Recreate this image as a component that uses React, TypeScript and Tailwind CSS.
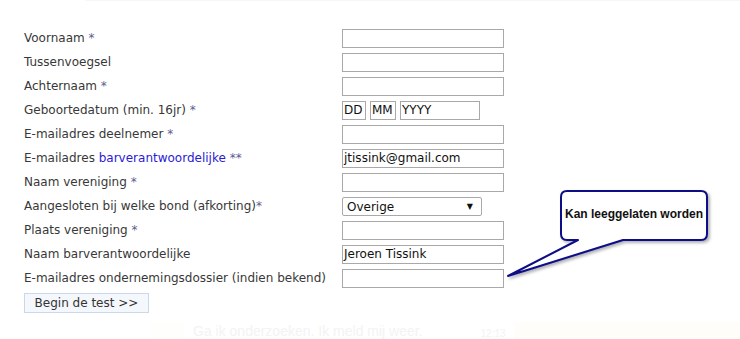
import React from "react";

const Star = ({ s = "*" }: { s?: string }) => (
  <span className="text-[#5c5c94]"> {s}</span>
);

function Input({ value = "", w = "w-[162px]" }: { value?: string; w?: string }) {
  return (
    <div
      className={`${w} h-[19px] border border-[#a9a9a9] bg-white px-[1px] text-[12px] leading-[17px] text-[#111] overflow-hidden whitespace-nowrap`}
    >
      {value}
    </div>
  );
}

export default function App() {
  const labelCls = "h-[19px] leading-[19px] whitespace-nowrap";
  const items: [React.ReactNode, React.ReactNode][] = [
    [<>Voornaam<Star /></>, <Input />],
    [<>Tussenvoegsel</>, <Input />],
    [<>Achternaam<Star /></>, <Input />],
    [
      <>Geboortedatum (min. 16jr)<Star /></>,
      <div className="flex gap-[4px]">
        <Input value="DD" w="w-[24px]" />
        <Input value="MM" w="w-[26px]" />
        <Input value="YYYY" w="w-[80px]" />
      </div>,
    ],
    [<>E-mailadres deelnemer<Star /></>, <Input />],
    [
      <>
        E-mailadres <span className="text-[#2a1bd6]">barverantwoordelijke</span>
        <Star s="**" />
      </>,
      <Input value="jtissink@gmail.com" />,
    ],
    [<>Naam vereniging<Star /></>, <Input />],
    [
      <>Aangesloten bij welke bond (afkorting)<span className="text-[#5c5c94]">*</span></>,
      <div className="w-[140px] h-[19px] border border-[#a9a9a9] rounded-[2px] bg-white flex items-center justify-between pl-[4px] pr-[8px] text-[12px] text-[#111]">
        <span>Overige</span>
        <span className="text-[8px]">▼</span>
      </div>,
    ],
    [<>Plaats vereniging<Star /></>, <Input />],
    [<>Naam barverantwoordelijke</>, <Input value="Jeroen Tissink" />],
    [<>E-mailadres ondernemingsdossier (indien bekend)</>, <Input />],
  ];

  return (
    <div
      className="relative w-[740px] h-[339px] bg-white overflow-hidden text-[#383838]"
      style={{ fontFamily: '"DejaVu Sans", Verdana, sans-serif' }}
    >
      <div className="h-[1px] ml-[85px] bg-[#f7f7f7]" />
      <div className="pt-[28px] pl-[24px]">
        <div className="grid grid-cols-[318px_auto] gap-y-[5px] text-[12px]">
          {items.map(([l, f], i) => (
            <React.Fragment key={i}>
              <div className={labelCls}>{l}</div>
              <div>{f}</div>
            </React.Fragment>
          ))}
        </div>
        <div className="mt-[5px] w-[125px] h-[20px] border border-[#c9d8ea] bg-[#f4f7fb] text-[12px] leading-[18px] text-[#333] text-center">
          Begin de test &gt;&gt;
        </div>
        <div
          className="mt-[9px] flex items-center h-[19px] text-[#f3f3f3] whitespace-nowrap"
          style={{ fontFamily: '"Liberation Sans", Arial, sans-serif' }}
        >
          <div className="ml-[126px] w-[34px] h-[19px] bg-[#fefefc] shrink-0" />
          <div className="ml-[9px] text-[14px] shrink-0">Ga ik onderzoeken. Ik meld mij weer.</div>
          <div className="ml-[58px] mt-[4px] text-[10px] shrink-0">12:13</div>
          <div className="ml-[8px] w-[230px] h-[19px] bg-[#fefdf9] shrink-0" />
        </div>
      </div>

      <div className="absolute left-[500px] top-[185px] w-[220px] h-[100px]">
        <svg width="220" height="100" viewBox="500 185 220 100" className="absolute inset-0">
          <defs>
            <filter id="sh" x="-10%" y="-10%" width="130%" height="140%">
              <feDropShadow dx="2" dy="2" stdDeviation="1.5" floodColor="#000" floodOpacity="0.3" />
            </filter>
          </defs>
          <path
            d="M 567 191 H 701 Q 707 191 707 197 V 234 Q 707 240 701 240 H 623 L 508 276 L 578 240 H 567 Q 561 240 561 234 V 197 Q 561 191 567 191 Z"
            fill="#fff"
            stroke="#0b0b85"
            strokeWidth="2"
            strokeLinejoin="round"
            filter="url(#sh)"
          />
        </svg>
        <div
          className="absolute left-[61px] top-[22px] w-[146px] text-center text-[12px] font-bold text-[#111] leading-[14px]"
          style={{ fontFamily: '"Liberation Sans", Arial, sans-serif' }}
        >
          Kan leeggelaten worden
        </div>
      </div>
    </div>
  );
}
